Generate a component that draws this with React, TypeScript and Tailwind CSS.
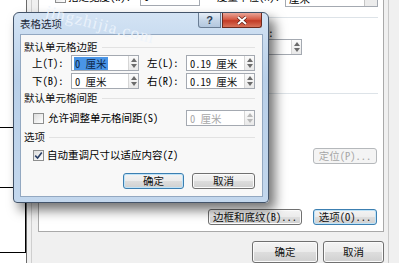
import type { ReactNode } from 'react';

const FONT = "font-['Noto_Sans_Mono_CJK_SC','Noto_Sans_CJK_SC',sans-serif]";

function SpinArrows({ dim }: { dim?: boolean }) {
  const c = dim ? '#b8b8b8' : '#6b6b6b';
  return (
    <div className="flex w-[10px] flex-col items-center justify-center gap-[2px] border-l border-[#d6d6d6] bg-[linear-gradient(to_bottom,#fbfbfb,#e9e9e9)]">
      <svg width="6" height="4" viewBox="0 0 6 4">
        <path d="M0 4 L3 0 L6 4 Z" fill={c} />
      </svg>
      <svg width="6" height="4" viewBox="0 0 6 4">
        <path d="M0 0 L3 4 L6 0 Z" fill={c} />
      </svg>
    </div>
  );
}

function Spin({
  value,
  w,
  selected,
  disabled,
}: {
  value: string;
  w: string;
  selected?: boolean;
  disabled?: boolean;
}) {
  return (
    <div className={`flex h-[16px] ${w} shrink-0 border border-[#a4a9b1] bg-white`}>
      <div className="flex flex-1 items-center pl-[2px]">
        <span
          className={
            selected
              ? 'bg-[#4a95e6] px-[1px] leading-[13px] text-[#0d2646]'
              : disabled
                ? 'px-[1px] leading-[13px] text-[#a8a8a8]'
                : 'px-[1px] leading-[13px] text-[#111]'
          }
        >
          {value}
        </span>
      </div>
      <SpinArrows dim={disabled} />
    </div>
  );
}

function Btn({
  children,
  w,
  focus,
  disabled,
}: {
  children: ReactNode;
  w: string;
  focus?: boolean;
  disabled?: boolean;
}) {
  const base = `flex h-[16px] ${w} shrink-0 items-center justify-center rounded-[3px] border`;
  if (disabled)
    return (
      <div className={`${base} border-[#b5b8bb] bg-[#f4f4f4] text-[#a6a6a6]`}>
        {children}
      </div>
    );
  return (
    <div
      className={`${base} ${
        focus
          ? 'border-[#3c7fb1] shadow-[inset_0_0_0_1px_#bfe3f8]'
          : 'border-[#707070] shadow-[inset_0_0_0_1px_#fbfbfb]'
      } bg-[linear-gradient(to_bottom,#f4f4f4_0%,#ebebeb_48%,#dddddd_52%,#d0d0d0_100%)] text-[#111]`}
    >
      {children}
    </div>
  );
}

function Check({ checked }: { checked?: boolean }) {
  return (
    <div className="flex h-[11px] w-[11px] shrink-0 items-center justify-center border border-[#8e8f8f] bg-[linear-gradient(135deg,#dcdcdc,#ffffff)]">
      {checked && (
        <svg width="9" height="9" viewBox="0 0 9 9">
          <path d="M1.2 4.6 L3.6 7 L7.8 1.5" stroke="#2a3f66" strokeWidth="1.6" fill="none" />
        </svg>
      )}
    </div>
  );
}

function Heading({ children }: { children: ReactNode }) {
  return (
    <div className="flex h-[14px] items-center pl-[3px] pr-[7px]">
      <span className="leading-[14px] text-[#111]">{children}</span>
      <div className="ml-[4px] h-px flex-1 bg-[#e2e2e2]" />
    </div>
  );
}

export default function App() {
  return (
    <div
      className={`relative flex h-[263px] w-[399px] overflow-hidden bg-white text-[10.5px] ${FONT}`}
    >
      {/* документ слева */}
      <div className="flex w-[26px] shrink-0 flex-col">
        <div className="h-[127px]" />
        <div className="h-px w-[13px] bg-black" />
        <div className="h-[59px]" />
        <div className="h-px w-[13px] bg-black" />
        <div className="h-[65px] w-[26px] border-r border-b border-black" />
      </div>

      {/* фоновое окно «表格属性» */}
      <div className="flex flex-1 border-l border-[#6a6a6a] bg-[#f0f0f0]">
        <div className="flex w-[11px] shrink-0">
          <div className="ml-[4px] w-px bg-[#cfcfcf]" />
        </div>
        <div className="flex w-[346px] shrink-0 flex-col">
          <div className="flex h-[236px] flex-col border border-t-0 border-[#a9a9a9] bg-white">
            <div className="-mt-[12px] flex h-[18px] items-center pl-[16px] pr-[5px]">
              <Check />
              <span className="ml-[2px] w-[72px]">指定宽度(W):</span>
              <div className="flex h-[18px] w-[60px] items-center border border-[#a4a9b1] pl-[3px]">0</div>
              <span className="ml-[17px] w-[68px]">度量单位(M):</span>
              <div className="flex h-[20px] flex-1 border border-[#a4a9b1] bg-white">
                <span className="flex-1 pl-[3px] pt-[3px]">厘米</span>
                <div className="w-[13px] border-l border-[#c6c6c6] bg-[#ececec]" />
              </div>
            </div>
            <div className="mt-[11px] mr-[5px] ml-[6px] h-px bg-[#dde3e8]" />
            <div className="mt-[9px] ml-[182px] flex w-[81px] flex-col">
              <span className="h-[12px] leading-[12px]">左缩进(I):</span>
              <Spin value="0 厘米" w="w-[81px]" />
            </div>
            <div className="mt-[38px] mr-[5px] ml-[6px] h-px bg-[#dde3e8]" />
            <div className="mt-[54px] flex justify-end pr-[6px]">
              <Btn w="w-[64px]" disabled>
                定位(P)...
              </Btn>
            </div>
            <div className="mt-[45px] flex justify-end gap-[11px] pr-[6px]">
              <Btn w="w-[94px]">边框和底纹(B)...</Btn>
              <Btn w="w-[64px]" focus>
                选项(O)...
              </Btn>
            </div>
          </div>
          <div className="flex justify-end gap-[5px] pt-[9px]">
            <div className="[&>div]:h-[22px]">
              <Btn w="w-[66px]">确定</Btn>
            </div>
            <div className="[&>div]:h-[22px]">
              <Btn w="w-[61px]">取消</Btn>
            </div>
          </div>
        </div>
        <div className="ml-[4px] w-px bg-[#c9c9c9]" />
      </div>

      {/* модальное окно «表格选项» */}
      <div className="absolute top-[12px] left-[13px] flex h-[191px] w-[256px] flex-col rounded-t-[6px] rounded-b-[4px] border border-[#43546a] bg-[linear-gradient(to_bottom,#d3e3f4,#b9d0e9_35%,#c3d7ed_100%)] shadow-[6px_7px_12px_rgba(0,0,0,0.55)]">
        <div className="flex h-[21px] items-start pr-[6px] pl-[6px]">
          <span className="mt-[5px] leading-[12px] text-[#1e2a38]">表格选项</span>
          <div className="ml-auto flex gap-px">
            <div className="flex h-[15px] w-[23px] items-center justify-center rounded-bl-[3px] border border-t-0 border-[#6a7d94] bg-[linear-gradient(to_bottom,#e6eef7,#c6d6e8_50%,#b3c7de)] font-['Liberation_Sans',sans-serif] text-[11px] font-bold text-[#2d3d52]">
              ?
            </div>
            <div className="flex h-[15px] w-[40px] items-center justify-center rounded-br-[3px] border border-t-0 border-[#6e2a1d] bg-[linear-gradient(to_bottom,#e9a597,#d65b45_45%,#c23b25_55%,#d8735a)]">
              <svg width="12" height="9" viewBox="0 0 12 9">
                <path d="M2 1 L10 8 M10 1 L2 8" stroke="#5a1a10" strokeWidth="3.2" />
                <path d="M2 1 L10 8 M10 1 L2 8" stroke="#ffffff" strokeWidth="2" />
              </svg>
            </div>
          </div>
        </div>
        <div className="mr-[5px] ml-[6px] flex h-[163px] flex-col border border-[#93a8c1] bg-[#f8f8f8]">
          <div className="mt-[5px]">
            <Heading>默认单元格边距</Heading>
          </div>
          <div className="mt-[1px] flex h-[16px] items-center pl-[11px]">
            <span className="w-[39px]">上(T):</span>
            <Spin value="0 厘米" w="w-[68px]" selected />
            <span className="ml-[8px] w-[39px]">左(L):</span>
            <Spin value="0.19 厘米" w="w-[69px]" />
          </div>
          <div className="mt-[2px] flex h-[16px] items-center pl-[11px]">
            <span className="w-[39px]">下(B):</span>
            <Spin value="0 厘米" w="w-[68px]" />
            <span className="ml-[8px] w-[39px]">右(R):</span>
            <Spin value="0.19 厘米" w="w-[69px]" />
          </div>
          <div className="mt-[2px]">
            <Heading>默认单元格间距</Heading>
          </div>
          <div className="mt-[5px] flex h-[16px] items-center pr-[7px] pl-[12px]">
            <Check />
            <span className="ml-[4px]">允许调整单元格间距(S)</span>
            <div className="ml-auto">
              <Spin value="0 厘米" w="w-[69px]" disabled />
            </div>
          </div>
          <div className="mt-[4px]">
            <Heading>选项</Heading>
          </div>
          <div className="mt-[4px] flex h-[14px] items-center pl-[12px]">
            <Check checked />
            <span className="ml-[3px]">自动重调尺寸以适应内容(Z)</span>
          </div>
          <div className="mt-[11px] flex justify-end gap-[8px] pr-[7px]">
            <Btn w="w-[61px]" focus>
              确定
            </Btn>
            <Btn w="w-[63px]">取消</Btn>
          </div>
        </div>
      </div>

      {/* водяной знак */}
      <div className="pointer-events-none absolute top-[12px] left-[44px] rotate-[14deg] font-['Liberation_Serif',serif] text-[17px] tracking-[1px] text-[#edf4fc]/90">
        jingzhijia.com
      </div>
    </div>
  );
}
